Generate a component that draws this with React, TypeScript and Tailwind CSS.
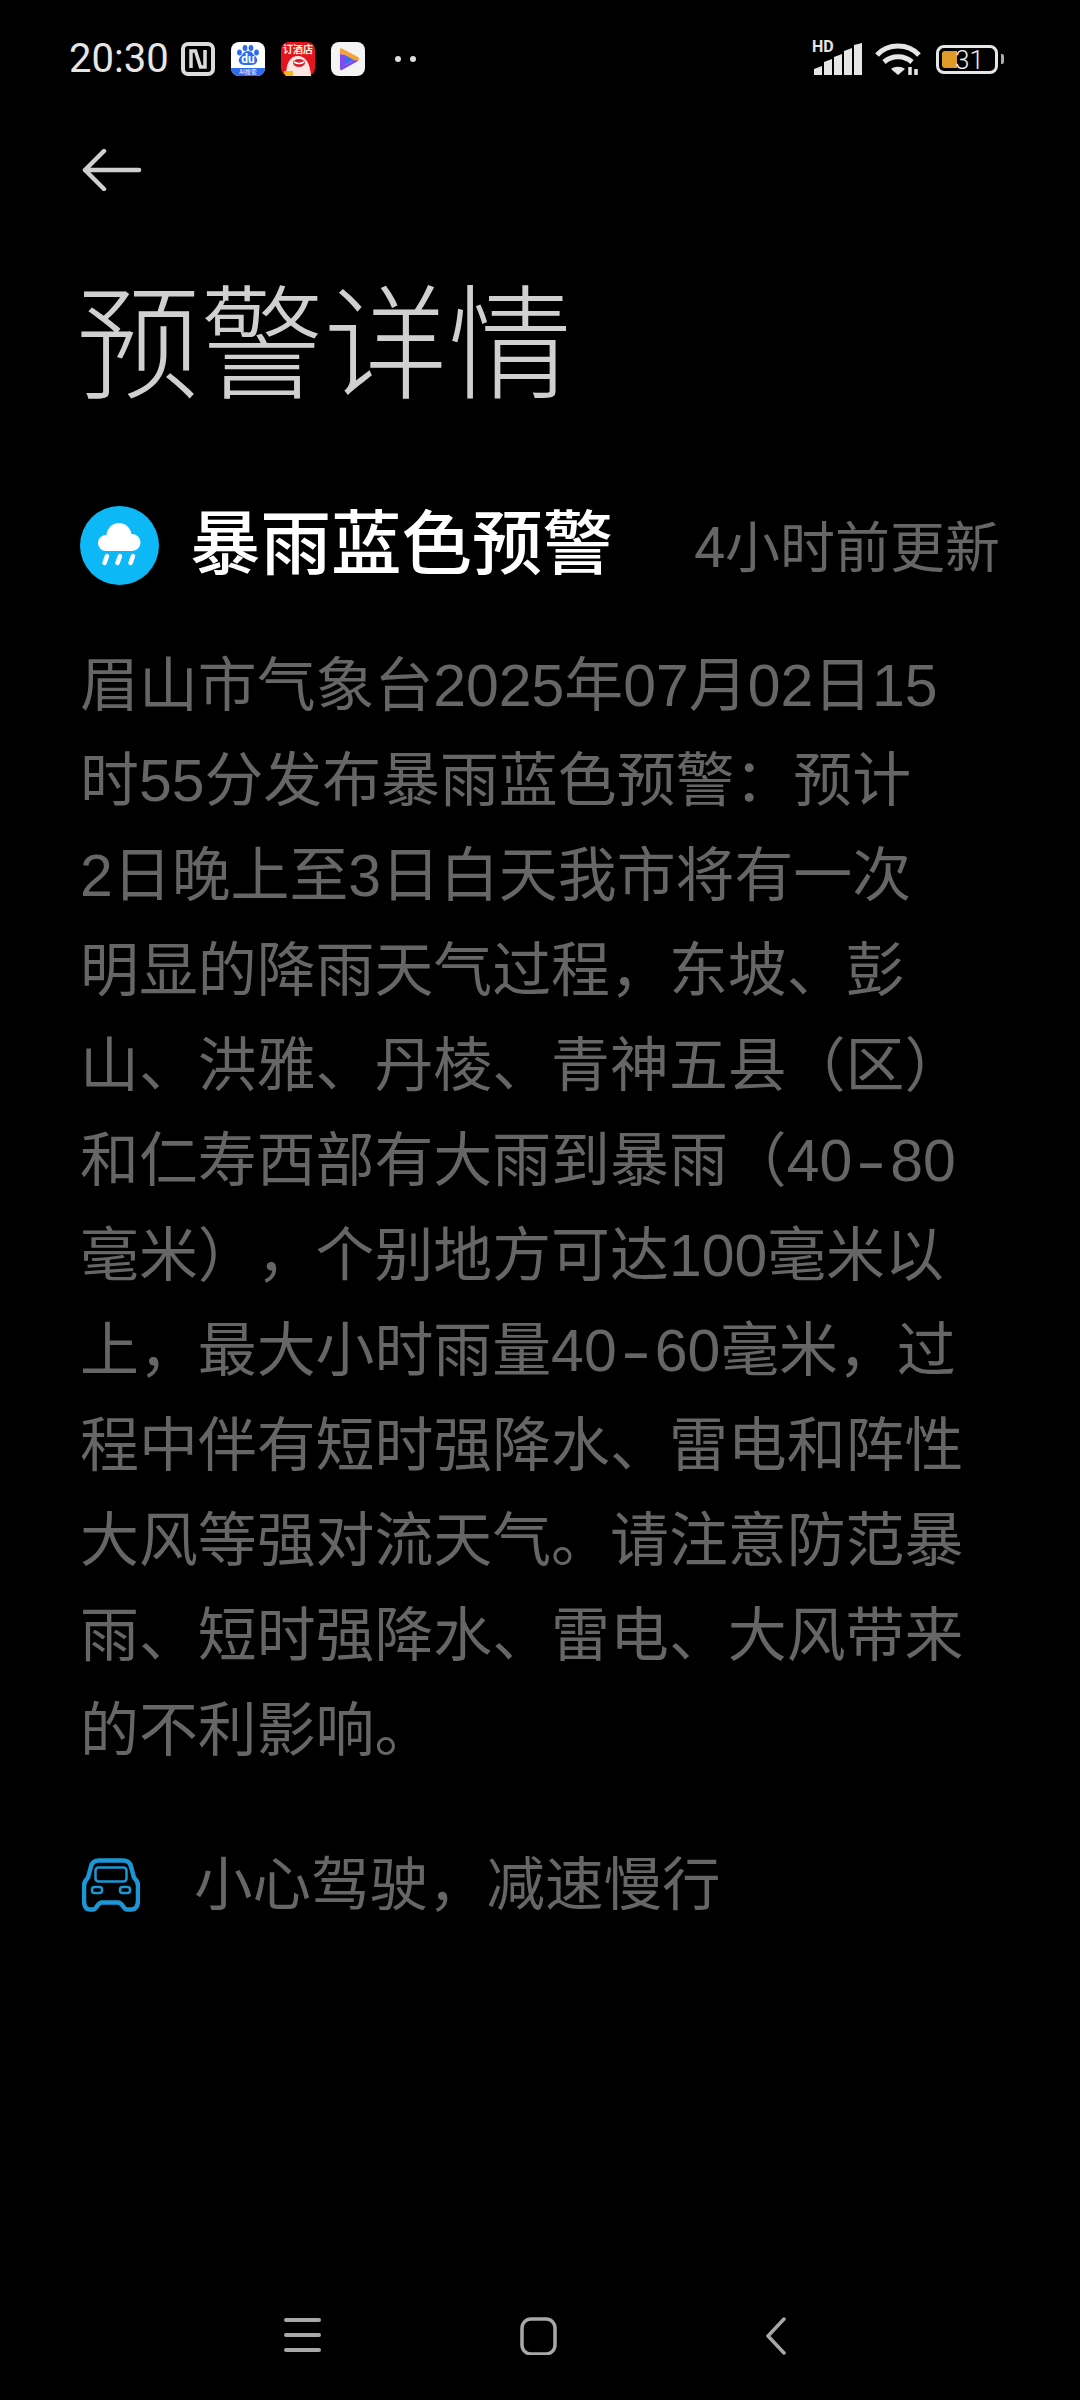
const font = "font-['Roboto','Noto_Sans_CJK_SC',sans-serif]"
const bodyFont = "font-['Liberation_Sans','Noto_Sans_CJK_SC',sans-serif]"

const lines = [
  ['眉山市气象台2025年07月02日15'],
  ['时55分发布暴雨蓝色预警：预计'],
  ['2日晚上至3日白天我市将有一次'],
  ['明显的降雨天气过程，东坡、彭'],
  ['山、洪雅、丹棱、青神五县（区）'],
  ['和仁寿西部有大雨到暴雨（40', '80'],
  ['毫米），个别地方可达100毫米以'],
  ['上，最大小时雨量40', '60毫米，过'],
  ['程中伴有短时强降水、雷电和阵性'],
  ['大风等强对流天气。请注意防范暴'],
  ['雨、短时强降水、雷电、大风带来'],
  ['的不利影响。'],
]

function NfcIcon() {
  return (
    <svg width="34" height="34" viewBox="0 0 34 34" fill="none" stroke="#dcdcdc">
      <rect x="2" y="2" width="30" height="30" rx="5" strokeWidth="4" />
      <path d="M10 26V9h4.500l5 16h4.500V8" strokeWidth="3.500" />
    </svg>
  )
}

function BaiduIcon() {
  return (
    <svg width="34" height="34" viewBox="0 0 34 34">
      <rect width="34" height="34" rx="8" fill="#fff" />
      <path d="M0 26h34v0a8 8 0 0 1-8 8H8a8 8 0 0 1-8-8z" fill="#2f6bed" />
      <ellipse cx="8.500" cy="10.500" rx="2.400" ry="3" fill="#2f6bed" />
      <ellipse cx="14" cy="6" rx="2.400" ry="3" fill="#2f6bed" />
      <ellipse cx="20" cy="6" rx="2.400" ry="3" fill="#2f6bed" />
      <ellipse cx="25.500" cy="10.500" rx="2.400" ry="3" fill="#2f6bed" />
      <path d="M17 9c-4 0-5 3-7 5-2 2-3 4-1.500 6.500 1 2 3 2.500 8.500 2.500s7.500-.5 8.500-2.500c1.500-2.500.5-4.500-1.500-6.500-2-2-3-5-7-5z" fill="#2f6bed" />
      <text x="17" y="21" textAnchor="middle" fontSize="12" fontWeight="700" fill="#fff" fontFamily="Roboto, sans-serif">du</text>
      <text x="17" y="32" textAnchor="middle" fontSize="6" fill="#fff" fontFamily="'Noto Sans CJK SC', sans-serif">AI搜索</text>
    </svg>
  )
}

function HotelIcon() {
  return (
    <svg width="34" height="34" viewBox="0 0 34 34">
      <rect width="34" height="34" rx="8" fill="#e5141f" />
      <text x="17" y="11" textAnchor="middle" fontSize="10" fontWeight="700" fill="#fff3e0" fontFamily="'Noto Sans CJK SC', sans-serif">订酒店</text>
      <path d="M5 34c0-13 4-20 12-20 7 0 12 6 13 20z" fill="#fde6e2" />
      <ellipse cx="18" cy="21" rx="6" ry="4" fill="#d5222c" />
      <path d="M13 20q5 3 10 0" stroke="#fff" strokeWidth="1.500" fill="none" />
      <path d="M3 29h9v5H7a4 4 0 0 1-4-4z" fill="#f6b71f" />
    </svg>
  )
}

function PlayIcon() {
  return (
    <svg width="34" height="34" viewBox="0 0 34 34">
      <rect width="34" height="34" rx="8" fill="#f4f4f4" />
      <path d="M9 7c0-1 1-1 2-.5L27 15c1.500 1 1.500 3 0 4l-4 2-9-8-5-1z" fill="#f6a23c" />
      <path d="M14 13l9 5-9 5z" fill="#3a6df0" />
      <path d="M9 12l5 1v10l9-5 4 1-16 9c-1 .5-2 0-2-1z" fill="#7d4cf0" />
    </svg>
  )
}

function SignalIcon() {
  return (
    <div className="relative h-[32px] w-[52px]">
      <span className={`absolute left-0 top-[-4px] text-[16px] font-bold leading-[16px] text-[#e6e6e6] ${font}`}>HD</span>
      <svg width="52" height="32" viewBox="0 0 52 32" fill="#e6e6e6">
        <path d="M2 26l8-3v9H2zM12 19l8-3v16h-8zM22 14l8-3v21h-8zM32 8l8-3v27h-8zM42 2l8-2v32h-8z" />
      </svg>
    </div>
  )
}

function WifiIcon() {
  return (
    <svg width="46" height="32" viewBox="0 0 46 32" fill="none" stroke="#e6e6e6" strokeWidth="5">
      <path d="M2 12C13 0 33 0 44 12" />
      <path d="M9 19c8-7 20-7 28 0" />
      <path d="M23 32l-7-6c4-3 10-3 14 0z" fill="#e6e6e6" stroke="none" />
      <path d="M35 24v8M41 26v6" strokeWidth="3.500" />
    </svg>
  )
}

function BatteryIcon() {
  return (
    <div className="flex items-center gap-[3px]">
      <div className="relative h-[29px] w-[62px] rounded-[8px] border-[3px] border-[#e6e6e6]">
        <div className="absolute left-[3px] top-[3px] h-[17px] w-[15px] rounded-l-[3px] bg-[#e09a28]" />
        <span className={`absolute left-[16px] top-[-1px] text-[26px] font-light leading-[26px] text-[#eeeeee] ${font}`}>31</span>
      </div>
      <div className="h-[10px] w-[3px] rounded-r-[2px] bg-[#aaaaaa]" />
    </div>
  )
}

function StatusBar() {
  return (
    <div className="flex h-[118px] items-center justify-between pl-[69px] pr-[76px]">
      <div className="flex items-center">
        <span className={`w-[112px] text-[40px] leading-none text-[#e6e6e6] ${font}`}>20:30</span>
        <NfcIcon />
        <div className="ml-[16px] flex gap-[16px]">
          <BaiduIcon />
          <HotelIcon />
          <PlayIcon />
        </div>
        <div className="ml-[30px] flex gap-[9px]">
          <div className="h-[6px] w-[6px] rounded-full bg-[#dddddd]" />
          <div className="h-[6px] w-[6px] rounded-full bg-[#dddddd]" />
        </div>
      </div>
      <div className="flex items-center">
        <SignalIcon />
        <div className="ml-[11px]">
          <WifiIcon />
        </div>
        <div className="ml-[15px]">
          <BatteryIcon />
        </div>
      </div>
    </div>
  )
}

function RainBadge() {
  return (
    <svg width="79" height="79" viewBox="0 0 79 79" className="shrink-0">
      <circle cx="39.500" cy="39.500" r="39.500" fill="#0db8f7" />
      <g fill="#fff">
        <circle cx="26" cy="37" r="8" />
        <circle cx="39" cy="29.500" r="12.500" />
        <circle cx="52" cy="36.500" r="8.500" />
        <rect x="26" y="33" width="26" height="12" />
      </g>
      <path d="M27 50l-2.500 7M40 50l-2.500 7M53 50l-2.500 7" stroke="#fff" strokeWidth="4.500" strokeLinecap="round" />
    </svg>
  )
}

function CarIcon() {
  return (
    <svg width="58" height="54" viewBox="0 0 58 54" fill="none" stroke="#1b97d6" className="shrink-0">
      <path d="M17 2.500h24c4 0 7 2 8 6l3 11c3 3 4 5 4 8v15c0 5-2 9-7 9h-4c-4 0-4-7-9-7H20c-5 0-5 7-9 7H8c-5 0-6-4-6-9V27.500c0-3 1-5 4-8L9 8.500c1-4 4-6 8-6z" strokeWidth="4.500" />
      <rect x="13.500" y="9.500" width="31" height="14" rx="3" strokeWidth="2.500" />
      <rect x="10" y="29" width="10" height="6" rx="2.500" strokeWidth="2.500" />
      <rect x="38" y="29" width="10" height="6" rx="2.500" strokeWidth="2.500" />
    </svg>
  )
}

function NavBar() {
  return (
    <div className="mt-auto flex h-[85px] items-start justify-center pt-[2px]">
      <svg width="38" height="36" viewBox="0 0 38 36" stroke="#a8a8a8" strokeWidth="4" strokeLinecap="round" className="ml-[-11px]">
        <path d="M2 3h33M2 18h33M2 33h33" />
      </svg>
      <svg width="38" height="38" viewBox="0 0 38 38" fill="none" stroke="#a8a8a8" strokeWidth="3.500" className="ml-[198px]">
        <rect x="2" y="2" width="33" height="35" rx="9" />
      </svg>
      <svg width="20" height="38" viewBox="0 0 20 38" fill="none" stroke="#a8a8a8" strokeWidth="3.500" strokeLinecap="round" strokeLinejoin="round" className="ml-[208px]">
        <path d="M18 2L2 19l16 17" />
      </svg>
    </div>
  )
}

export default function App() {
  return (
    <div className={`flex h-[2400px] w-[1080px] flex-col overflow-hidden bg-black [text-spacing-trim:space-all] ${font}`}>
      <StatusBar />
      <div className="pl-[82px] pt-[31px]">
        <svg width="60" height="42" viewBox="0 0 60 42" fill="none" stroke="#cfcfcf" strokeWidth="4.500" strokeLinecap="round" strokeLinejoin="round">
          <path d="M57 21H3M22 2L3 21l19 19" />
        </svg>
      </div>
      <h1 className="mt-[76px] pl-[76px] text-[124px] font-light leading-[160px] text-[#d0d0d0]">预警详情</h1>
      <div className="mt-[79px] flex h-[79px] items-center pl-[80px] pr-[80px]">
        <RainBadge />
        <span className="ml-[31px] text-[70.500px] font-medium leading-[79px] text-white">暴雨蓝色预警</span>
        <span className="ml-auto h-[79px] pt-[3px] text-[55px] leading-[79px] text-[#666666]">4小时前更新</span>
      </div>
      <div className={`mt-[53px] pl-[80px] text-[58.900px] leading-[95px] text-[#666666] ${bodyFont}`}>
        {lines.map((parts) => (
          <div key={parts[0]} className="whitespace-nowrap">
            {parts[0]}
            {parts[1] && (
              <>
                <span className="inline-block w-[38px] scale-x-150 text-center">-</span>
                {parts[1]}
              </>
            )}
          </div>
        ))}
      </div>
      <div className="mt-[69px] flex items-center pl-[82px]">
        <CarIcon />
        <span className="ml-[54px] text-[58.500px] leading-[76px] text-[#666666]">小心驾驶，减速慢行</span>
      </div>
      <NavBar />
    </div>
  )
}
